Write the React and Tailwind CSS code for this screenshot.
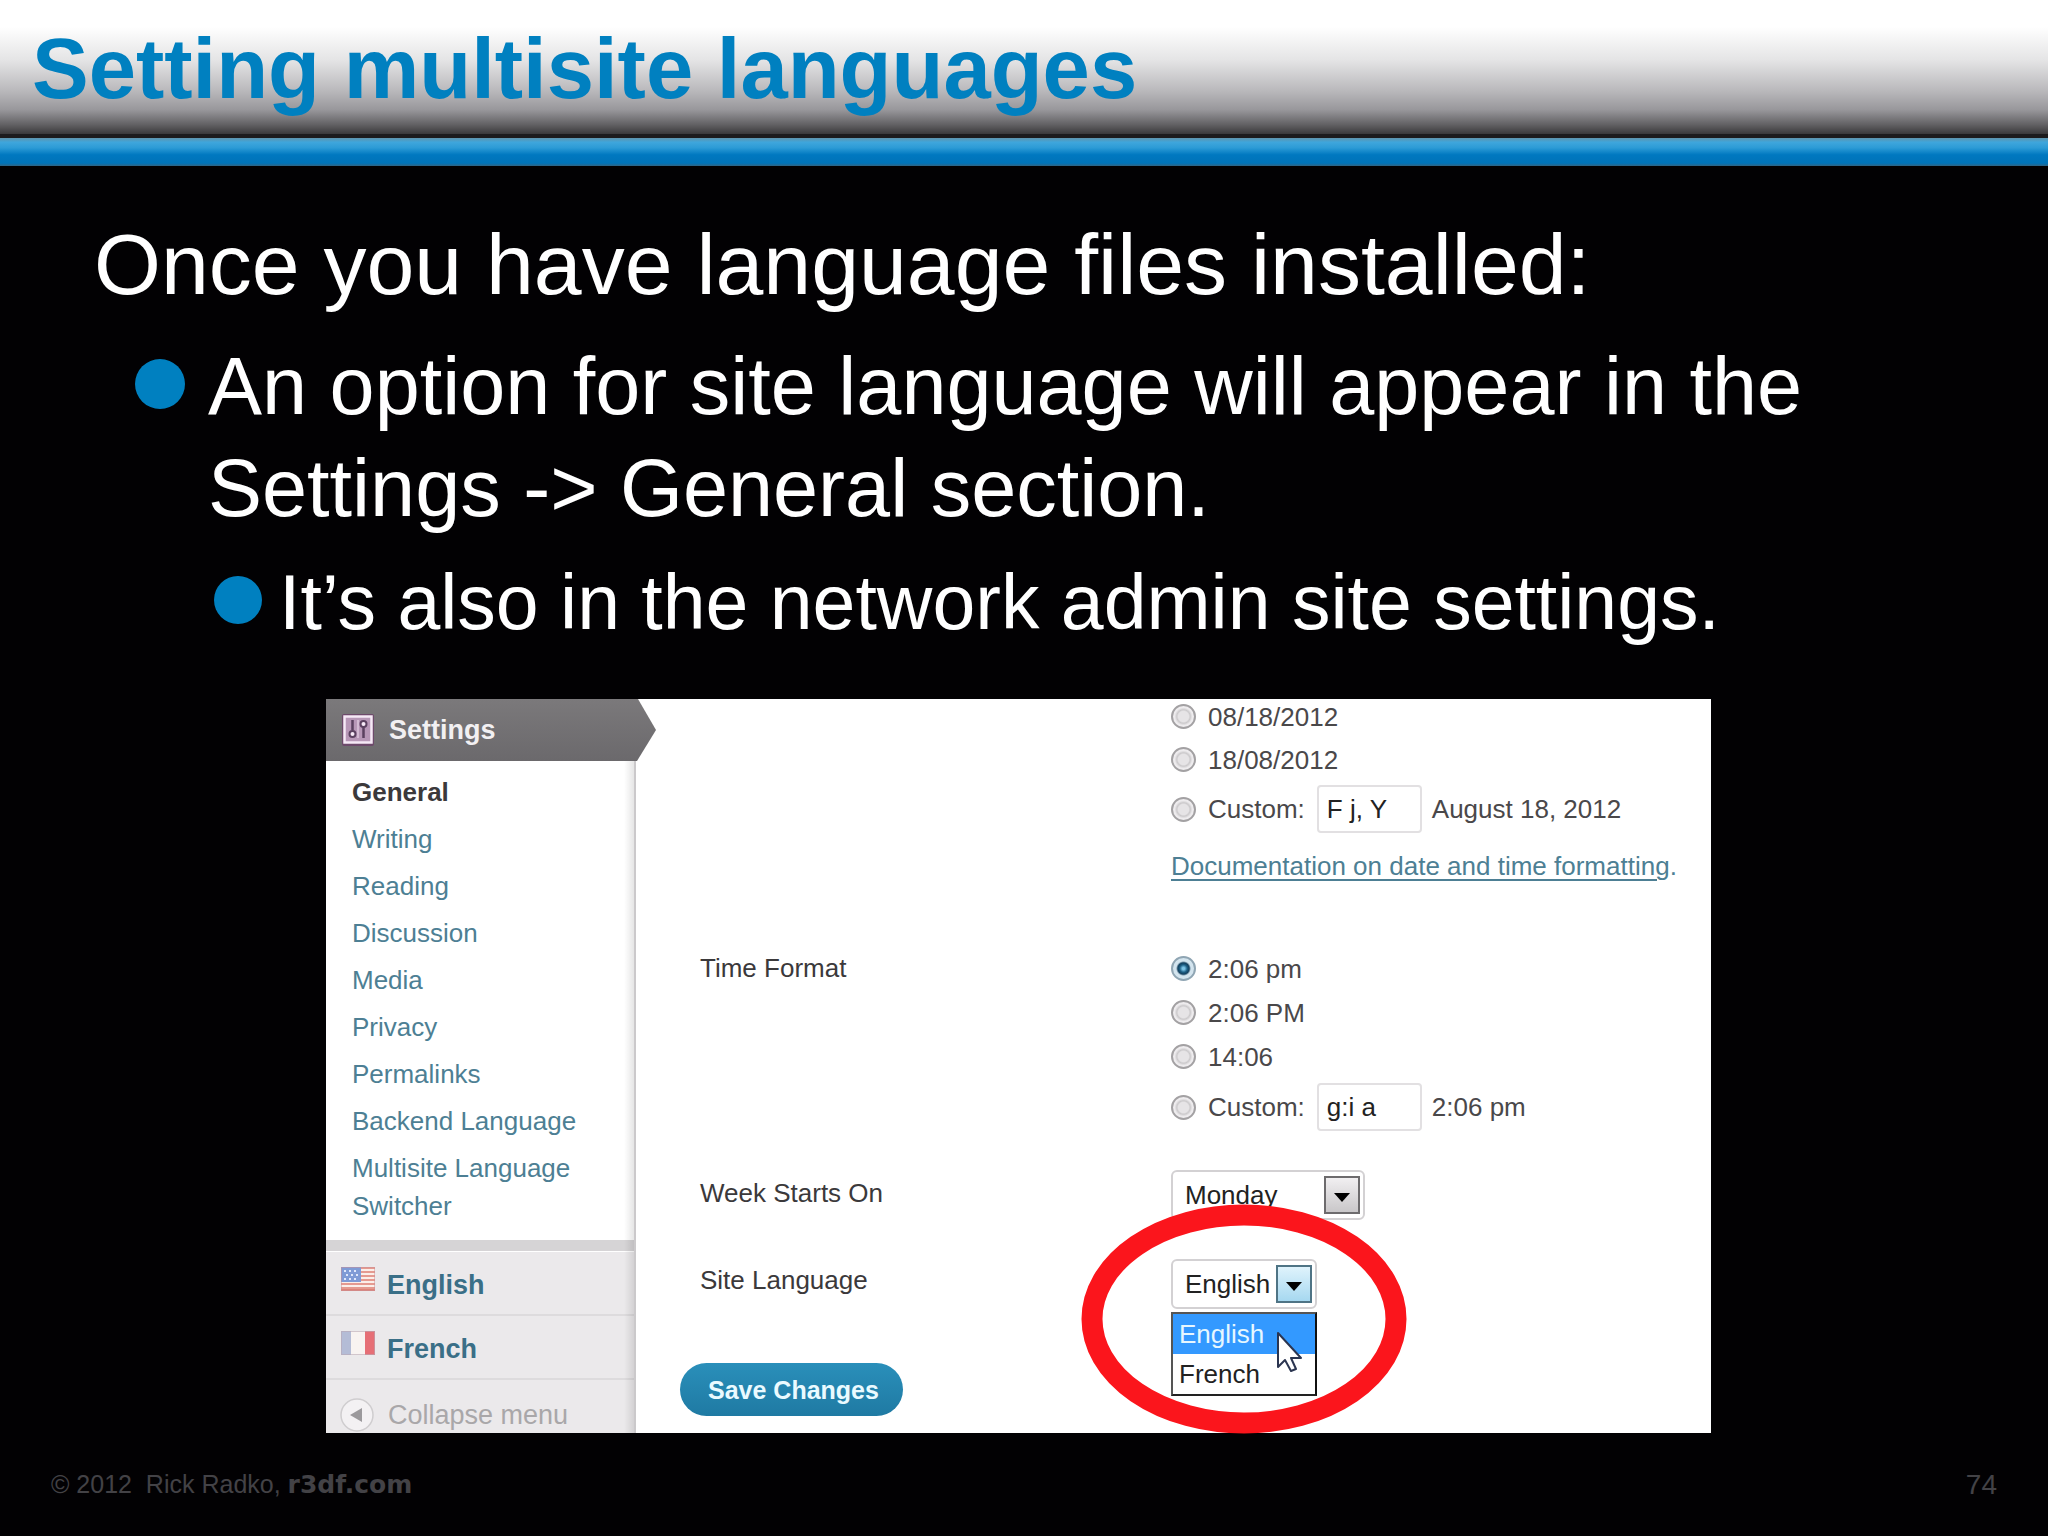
import React from "react";

const menuItems = [
  "General",
  "Writing",
  "Reading",
  "Discussion",
  "Media",
  "Privacy",
  "Permalinks",
  "Backend Language",
  "Multisite Language Switcher",
];

function SettingsIcon() {
  return (
    <svg viewBox="0 0 32 32" className="w-8 h-8 shrink-0" aria-hidden="true">
      <rect width="32" height="32" rx="2" fill="#6d4a6b" />
      <rect x="2.5" y="2.5" width="27" height="26" fill="#b797b7" stroke="#f6e9f6" strokeWidth="2.5" />
      <path d="M10.5 6v10M21.5 12v12" stroke="#5b4160" strokeWidth="2.5" />
      <circle cx="10.5" cy="20" r="3" fill="#f6e9f6" stroke="#5b4160" strokeWidth="2" />
      <circle cx="21.5" cy="10" r="3" fill="#f6e9f6" stroke="#5b4160" strokeWidth="2" />
      <path d="M15 6h2v18h-2z" fill="#d3bad3" />
    </svg>
  );
}

function UsFlag() {
  return (
    <svg viewBox="0 0 34 24" className="mb-3 w-[34px] h-6 shrink-0" aria-hidden="true">
      <rect width="34" height="24" fill="#fbeee9" />
      {[0, 4, 8, 12, 16, 20].map((y) => (
        <rect key={y} y={y} width="34" height="2" fill="#e59a90" />
      ))}
      <rect y="22" width="34" height="2" fill="#dd8378" />
      <rect width="20" height="15" fill="#7f9bd6" />
      <path d="M3 4h2M8 4h2M13 4h2M5 8h2M10 8h2M15 8h2M3 12h2M8 12h2M13 12h2" stroke="#dfe7fa" strokeWidth="2" />
      <rect x=".5" y=".5" width="33" height="23" fill="none" stroke="#c98f96" strokeOpacity=".5" />
    </svg>
  );
}

function FrenchFlag() {
  return (
    <svg viewBox="0 0 34 24" className="mb-3 w-[34px] h-6 shrink-0" aria-hidden="true">
      <rect width="34" height="24" fill="#f8f3f1" />
      <rect width="10" height="24" fill="#b4bcd6" />
      <rect x="24" width="10" height="24" fill="#e66f76" />
      <rect x=".5" y=".5" width="33" height="23" fill="none" stroke="#b9a9b4" strokeOpacity=".6" />
    </svg>
  );
}

function CollapseIcon() {
  return (
    <svg viewBox="0 0 34 34" className="w-[34px] h-[34px] shrink-0" aria-hidden="true">
      <circle cx="17" cy="17" r="16" fill="#f3f1f3" stroke="#cfcdcf" strokeWidth="1.5" />
      <path d="M22 10v14L10 17z" fill="#9b999c" />
    </svg>
  );
}

function Bullet({ className }) {
  return <span className={`shrink-0 rounded-full bg-[#0080c0] ${className}`} />;
}

function RadioRow({ name, label, checked, children }) {
  return (
    <div className={`flex items-center ${children ? "h-12" : "h-[35px]"}`}>
      <label className="flex items-center gap-3">
        <input
          type="radio"
          name={name}
          defaultChecked={checked}
          className="appearance-none w-[25px] h-[25px] rounded-full border-2 border-[#a3a1a3] bg-[radial-gradient(circle,#e6e4e6_0_35%,#cbc9cb_45%,#eeecee_60%)] checked:border-[#8fa5b3] checked:bg-[radial-gradient(circle,#7cc4e6_0_8%,#1d6086_25%,#123f5e_38%,#d3e4ee_50%)]"
        />
        <span>{label}</span>
      </label>
      {children}
    </div>
  );
}

function FormatInput({ label, value }) {
  return (
    <input
      type="text"
      aria-label={label}
      defaultValue={value}
      className="ml-3 w-[105px] h-12 rounded border-2 border-[#e2e0e2] px-2 text-[#222]"
    />
  );
}

function Dropdown({ id, options, className, arrowClassName }) {
  return (
    <div className={`relative ${className}`}>
      <select
        id={id}
        className="appearance-none w-full h-[50px] rounded-md border-2 border-[#d3d1d3] bg-white pl-3 text-[#222]"
      >
        {options.map((o) => (
          <option key={o}>{o}</option>
        ))}
      </select>
      <span
        className={`pointer-events-none absolute right-[5px] top-[6px] w-9 h-[38px] border-2 flex items-center justify-center ${arrowClassName}`}
      >
        <svg viewBox="0 0 16 9" className="mt-1 w-4 h-[9px]" aria-hidden="true">
          <path d="M0 0h16L8 9z" fill="#000" />
        </svg>
      </span>
    </div>
  );
}

function Sidebar() {
  return (
    <nav className="relative w-[310px] shrink-0 flex flex-col bg-white">
      <div className="relative h-[62px] flex items-center gap-[15px] pl-4 bg-linear-to-b from-[#7b797b] to-[#6b696c] text-[27px] font-bold text-[#f2f0f2]">
        <SettingsIcon />
        <span>Settings</span>
        <svg viewBox="0 0 20 62" className="absolute left-full top-0 w-5 h-[62px]" aria-hidden="true">
          <defs>
            <linearGradient id="tip" x2="0" y2="1">
              <stop stopColor="#7b797b" />
              <stop offset="1" stopColor="#6b696c" />
            </linearGradient>
          </defs>
          <path d="M0 0h2l18 31L1 62H0z" fill="url(#tip)" />
        </svg>
      </div>
      <ul className="flex flex-col gap-[9px] pt-3 pb-[15px] pl-[26px] pr-8 text-[26px] leading-[38px] text-[#4d7f94]">
        {menuItems.map((item, i) => (
          <li key={item}>
            <a href="#" className={i === 0 ? "font-bold text-[#3b393b]" : ""}>
              {item}
            </a>
          </li>
        ))}
      </ul>
      <div className="h-3 bg-[#d6d4d6] border-b border-white" />
      <div className="flex-1 bg-[#ebe9eb] text-[27px] font-bold text-[#3a6f87]">
        <a href="#" className="h-16 flex items-center gap-3 pt-1 pl-[15px] border-b-2 border-[#dddbdd]">
          <UsFlag />
          <span>English</span>
        </a>
        <a href="#" className="h-16 flex items-center gap-3 pt-1 pl-[15px] border-b-2 border-[#dddbdd]">
          <FrenchFlag />
          <span>French</span>
        </a>
        <button type="button" className="flex items-center gap-[14px] pl-[14px] pt-[17px] font-normal leading-9 text-[#a9a7a9]">
          <CollapseIcon />
          <span>Collapse menu</span>
        </button>
      </div>
      <div className="absolute right-0 top-[62px] bottom-0 w-3 border-r-2 border-[#cbc9cb] bg-linear-to-r from-transparent to-black/10" />
    </nav>
  );
}

function LanguagePopup() {
  return (
    <>
      <ul className="absolute left-0 top-[53px] w-[146px] border-2 border-[#555] border-r-[#111] border-b-[#222] bg-white leading-[40px]">
        <li className="bg-[#3399ff] pl-[6px] text-[#e6f7ff]">English</li>
        <li className="pl-[6px] text-[#222]">French</li>
      </ul>
      <svg viewBox="0 0 28 42" className="absolute left-[105px] top-[72px] w-7 h-[42px]" aria-hidden="true">
        <path
          d="M2 2v34l7-7 6 11 5-2-5-11h10z"
          fill="#fff"
          stroke="#2b3550"
          strokeWidth="2"
          strokeLinejoin="round"
        />
      </svg>
      <svg viewBox="0 0 326 230" className="absolute -left-[90px] -top-[55px] w-[326px] h-[230px] pointer-events-none" aria-hidden="true">
        <ellipse cx="163" cy="115" rx="152" ry="104" fill="none" stroke="#fb151c" strokeWidth="21" />
      </svg>
    </>
  );
}

function GeneralSettings() {
  return (
    <form className="flex-1 pl-11 pb-[17px] text-[26px] leading-[34px] text-[#4a484a]">
      <div className="grid grid-cols-[491px_1fr]">
        <div className="col-start-2 flex flex-col gap-2">
          <RadioRow name="date" label="08/18/2012" />
          <RadioRow name="date" label="18/08/2012" />
          <RadioRow name="date" label="Custom:">
            <FormatInput label="Custom date format" value="F j, Y" />
            <span className="ml-[10px]">August 18, 2012</span>
          </RadioRow>
          <p className="mt-2 text-[#4d7f94]">
            <a href="#" className="underline underline-offset-4 decoration-2">
              Documentation on date and time formatting
            </a>
            .
          </p>
        </div>
      </div>

      <div className="mt-[68px] grid grid-cols-[471px_1fr] pl-5">
        <div className="text-[#3b393b]">Time Format</div>
        <div className="flex flex-col gap-[9px]">
          <RadioRow name="time" label="2:06 pm" checked />
          <RadioRow name="time" label="2:06 PM" />
          <RadioRow name="time" label="14:06" />
          <RadioRow name="time" label="Custom:">
            <FormatInput label="Custom time format" value="g:i a" />
            <span className="ml-[10px]">2:06 pm</span>
          </RadioRow>
        </div>
      </div>

      <div className="mt-[39px] grid grid-cols-[471px_1fr] items-center pl-5 text-[#3b393b]">
        <label htmlFor="week" className="mb-1">
          Week Starts On
        </label>
        <Dropdown
          id="week"
          options={["Monday", "Sunday"]}
          className="w-[194px]"
          arrowClassName="border-[#6d6b6d] bg-linear-to-b from-[#f1eff1] to-[#c9c7c9]"
        />
      </div>

      <div className="mt-[39px] grid grid-cols-[471px_1fr] items-center pl-5 text-[#3b393b]">
        <label htmlFor="language" className="mb-2">
          Site Language
        </label>
        <div className="relative">
          <Dropdown
            id="language"
            options={["English", "French"]}
            className="w-[146px]"
            arrowClassName="border-[#4f7485] bg-linear-to-b from-[#dff3fc] to-[#a6d8f0]"
          />
          <LanguagePopup />
        </div>
      </div>

      <button
        type="submit"
        className="mt-[54px] block h-[53px] rounded-full bg-linear-to-b from-[#2a8fba] to-[#1f7aa3] pl-7 pr-6 text-[25px] font-bold text-[#eafaff]"
      >
        Save Changes
      </button>
    </form>
  );
}

export default function App() {
  return (
    <div className="min-h-screen flex flex-col bg-[#020103] font-['Liberation_Sans',Arial,sans-serif] text-white">
      <header>
        <div className="h-[138px] flex items-center pt-1 pl-8 border-b-4 border-[#1c1b1d] bg-[linear-gradient(#fff_20%,#e4e4e5_45%,#b9b8bb_68%,#98979b_82%,#626164_93%,#3a393b)]">
          <h1 className="text-[85px] leading-[96px] font-bold text-[#0080c0]">
            Setting multisite languages
          </h1>
        </div>
        <div className="h-7 bg-[linear-gradient(#5f93ac,#3fa6dc_15%,#2c9bd6_35%,#0078c0_60%,#0073b8_90%,#2f6484)]" />
      </header>

      <main className="pt-[47px]">
        <p className="pl-[94px] text-[86px] leading-[102px]">
          Once you have language files installed:
        </p>
        <ul>
          <li className="mt-5 flex gap-[23px] pl-[135px] pr-32 text-[81px] leading-[102px]">
            <Bullet className="mt-6 w-[50px] h-[50px]" />
            <span>
              An option for site language will appear in the Settings -&gt;
              General section.
            </span>
          </li>
          <li className="mt-[18px] flex gap-[17px] pl-[214px] text-[77px] leading-[90px]">
            <Bullet className="mt-[19px] w-12 h-12" />
            <span>It’s also in the network admin site settings.</span>
          </li>
        </ul>

        <section className="mt-[52px] ml-[326px] mr-[337px] flex bg-white">
          <Sidebar />
          <GeneralSettings />
        </section>
      </main>

      <footer className="flex-1 flex items-center justify-between px-[51px] text-[25px] text-[#434246]">
        <p>
          © 2012&nbsp; Rick Radko,{" "}
          <a href="#" className="font-['DejaVu_Sans',sans-serif] font-bold">
            r3df.com
          </a>
        </p>
        <span className="text-[28px]">74</span>
      </footer>
    </div>
  );
}
